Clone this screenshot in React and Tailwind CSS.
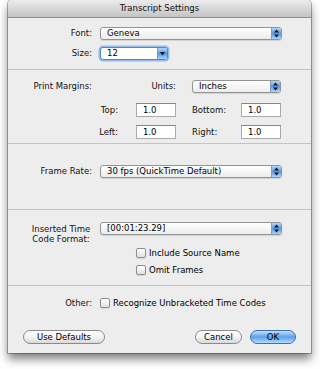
import React from "react";

// Mac OS X style "Transcript Settings" sheet

function Arrows({ single }) {
  if (single) {
    return (
      <svg width="5" height="4" viewBox="0 0 5 4">
        <path d="M0 0 L5 0 L2.5 3.5 Z" fill="#111" />
      </svg>
    );
  }
  return (
    <svg width="5" height="9" viewBox="0 0 5 9">
      <path d="M0 3.5 L5 3.5 L2.5 0.5 Z" fill="#111" />
      <path d="M0 5.5 L5 5.5 L2.5 8.5 Z" fill="#111" />
    </svg>
  );
}

function Popup({ value, className, focused }) {
  return (
    <div
      className={
        "flex h-[13px] items-stretch rounded-[3px] border " +
        (focused
          ? "border-[#4f86d0] bg-white shadow-[0_0_0_1.5px_rgba(120,170,235,0.75)] "
          : "border-[#939393] bg-gradient-to-b from-white to-[#ececec] shadow-[0_1px_1px_rgba(0,0,0,0.12)] ") +
        className
      }
    >
      <span className="flex-1 truncate pl-[6px] leading-[11px] text-black">{value}</span>
      <span className="flex w-[10px] items-center justify-center rounded-r-[2px] border-l border-[#7d9cc6] bg-gradient-to-b from-[#b4d6f8] via-[#5398e6] to-[#a9d6fb]">
        <Arrows single={focused} />
      </span>
    </div>
  );
}

function Field({ value }) {
  return (
    <div className="h-[14px] w-[40px] border border-[#a9a9a9] border-t-[#868686] bg-white pl-[6px] leading-[12px] text-black">
      {value}
    </div>
  );
}

function Check({ label }) {
  return (
    <div className="flex items-center gap-[3px]">
      <span className="h-[10px] w-[10px] rounded-[2px] border border-[#8d8d8d] bg-gradient-to-b from-white to-[#e1e1e1] shadow-[0_1px_1px_rgba(0,0,0,0.1)]" />
      <span className="leading-[10px] text-black">{label}</span>
    </div>
  );
}

function Button({ children, className, primary }) {
  return (
    <div
      className={
        "flex h-[14px] items-center justify-center rounded-full border leading-[12px] text-black " +
        (primary
          ? "border-[#3f6fae] bg-gradient-to-b from-[#c3e0fb] via-[#5c9fe9] to-[#b3dcfc] "
          : "border-[#8a8a8a] bg-gradient-to-b from-white via-[#f3f3f3] to-[#d9d9d9] ") +
        className
      }
    >
      {children}
    </div>
  );
}

export default function App() {
  return (
    <div
      className="h-[369px] w-[320px] overflow-hidden bg-white pl-[8px] text-[8.5px] text-[#111]"
      style={{ fontFamily: '"Lucida Grande", "DejaVu Sans", sans-serif' }}
    >
      <div className="flex h-[353px] w-[303px] flex-col overflow-hidden rounded-t-[4px] bg-[#ededed] shadow-[0_0_0_1px_rgba(0,0,0,0.28),0_6px_10px_rgba(0,0,0,0.5)]">
        {/* title bar */}
        <div className="flex h-[18px] items-center justify-center border-b border-[#8c8c8c] bg-gradient-to-b from-[#ececec] to-[#c4c4c4] text-[8.5px] text-[#111]">
          Transcript Settings
        </div>

        {/* font */}
        <div className="flex h-[52px] flex-col gap-[7px] border-b border-[#c3c3c3] pt-[9px]">
          <div className="flex items-center">
            <span className="w-[84px] text-right">Font:</span>
            <Popup value="Geneva" className="ml-[8px] w-[182px]" />
          </div>
          <div className="flex items-center">
            <span className="w-[84px] text-right">Size:</span>
            <Popup value="12" focused className="ml-[8px] w-[68px]" />
          </div>
        </div>

        {/* margins */}
        <div className="flex h-[74px] flex-col border-b border-[#c3c3c3] pt-[10px]">
          <div className="flex items-center">
            <span className="w-[84px] text-right">Print Margins:</span>
            <span className="w-[84px] text-right">Units:</span>
            <Popup value="Inches" className="ml-[16px] w-[89px]" />
          </div>
          <div className="mt-[10px] flex items-center">
            <span className="w-[110px] text-right">Top:</span>
            <div className="ml-[18px]">
              <Field value="1.0" />
            </div>
            <span className="ml-[16px] w-[49px]">Bottom:</span>
            <Field value="1.0" />
          </div>
          <div className="mt-[8px] flex items-center">
            <span className="w-[110px] text-right">Left:</span>
            <div className="ml-[18px]">
              <Field value="1.0" />
            </div>
            <span className="ml-[16px] w-[49px]">Right:</span>
            <Field value="1.0" />
          </div>
        </div>

        {/* frame rate */}
        <div className="flex h-[66px] flex-col border-b border-[#c3c3c3] pt-[21px]">
          <div className="flex items-center">
            <span className="w-[84px] text-right">Frame Rate:</span>
            <Popup value="30 fps (QuickTime Default)" className="ml-[8px] w-[182px]" />
          </div>
        </div>

        {/* time code */}
        <div className="flex h-[76px] flex-col border-b border-[#c3c3c3] pt-[12px]">
          <div className="flex items-start">
            <span className="ml-[20px] mt-[2px] w-[66px] text-center leading-[10px]">
              Inserted Time
              <br />
              Code Format:
            </span>
            <Popup value="[00:01:23.29]" className="ml-[6px] w-[182px]" />
          </div>
          <div className="ml-[128px] mt-[4px] flex flex-col gap-[7px]">
            <Check label="Include Source Name" />
            <Check label="Omit Frames" />
          </div>
        </div>

        {/* other + buttons */}
        <div className="flex flex-1 flex-col pt-[11px]">
          <div className="flex items-center">
            <span className="w-[84px] text-right">Other:</span>
            <div className="ml-[8px]">
              <Check label="Recognize Unbracketed Time Codes" />
            </div>
          </div>
          <div className="mt-[20px] flex items-center">
            <Button className="ml-[15px] w-[82px]">Use Defaults</Button>
            <Button className="ml-[90px] w-[47px]">Cancel</Button>
            <Button primary className="ml-[8px] w-[46px]">OK</Button>
          </div>
        </div>
      </div>
    </div>
  );
}
